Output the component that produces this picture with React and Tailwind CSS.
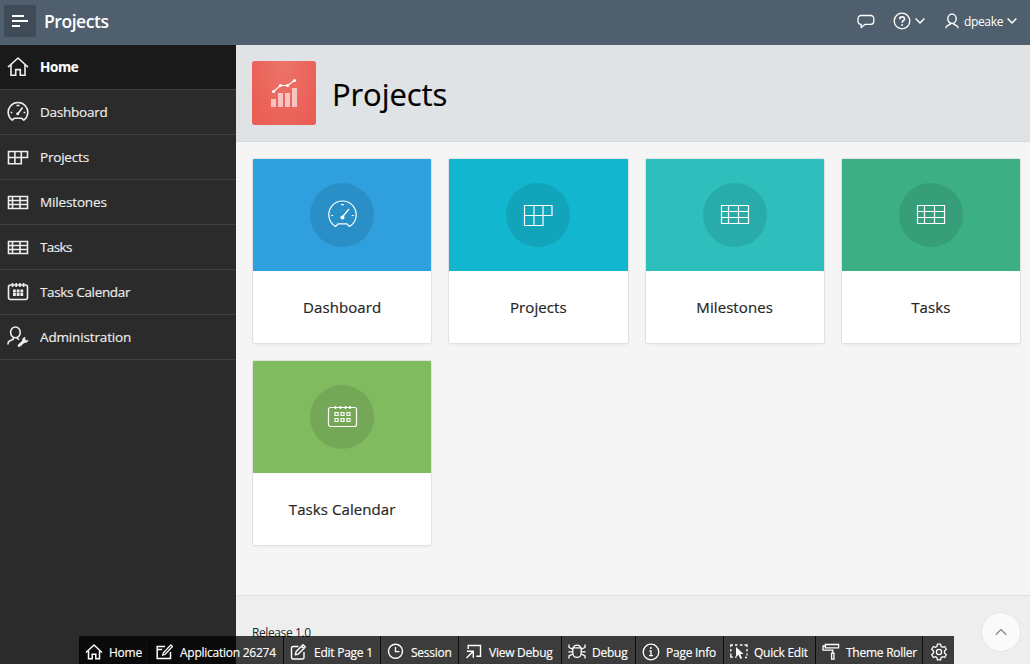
import React from "react";

const stroke = {
  fill: "none",
  stroke: "currentColor",
  strokeLinecap: "butt",
  strokeLinejoin: "round",
};

function Svg({ w = 20, h = 20, sw = 1.3, className = "", children }) {
  return (
    <svg width={w} height={h} viewBox={`0 0 ${w} ${h}`} strokeWidth={sw} {...stroke} className={`block shrink-0 ${className}`}>
      {children}
    </svg>
  );
}

const HomeIcon = () => (
  <Svg w={22} h={22} sw={1.6}>
    <path d="M1 11.2 11 2l10 9.2" />
    <path d="M4 9v10.2h4.7v-5.6h4.6v5.6H18V9" strokeLinejoin="miter" />
  </Svg>
);

const SmallHomeIcon = () => (
  <Svg w={18} h={18} sw={1.5}>
    <path d="M1 9.5 9 2l8 7.5" />
    <path d="M3.5 8v7.8h3.7v-4.6h3.6v4.6h3.7V8" strokeLinejoin="miter" />
  </Svg>
);

const GaugeIcon = () => (
  <Svg w={22} h={22} sw={1.6}>
    <path d="M5.2 19.2A9.8 9.8 0 1 1 16.8 19.2L14.8 17.3H7.2Z" />
    <path d="M9.5 4.5h3M3.6 11.5h1.8M16.6 11.5h1.8M11 12.5l4.6-6" />
    <circle cx="10.7" cy="12.8" r="1.5" fill="currentColor" stroke="none" />
  </Svg>
);

const ProjectsIcon = () => (
  <Svg w={22} h={22} sw={1.6}>
    <path d="M1.5 5.5h19v6h-6.2v6.2H1.5zM1.5 11.5h13M7.9 5.5v12.2M14.3 5.5v6" strokeLinejoin="miter" />
  </Svg>
);

const TableIcon = () => (
  <Svg w={22} h={22} sw={1.6}>
    <path d="M1.5 5.5h19v12H1.5zM1.5 9.5h19M1.5 13.5h19M5.5 5.5v12M13 5.5v12" strokeLinejoin="miter" />
  </Svg>
);

const CalendarIcon = () => (
  <Svg w={22} h={22} sw={1.6}>
    <rect x="1.5" y="4" width="19" height="14.5" rx="2" />
    <path d="M5.5 2v4M9.2 2v4M12.9 2v4M16.6 2v4" />
    <path d="M6 10h2.8M9.7 10h2.8M13.4 10h2.8M6 13.5h2.8M9.7 13.5h2.8M13.4 13.5h2.8" strokeWidth="2.8" />
  </Svg>
);

const AdminIcon = () => (
  <Svg w={22} h={22} sw={1.6}>
    <ellipse cx="8.4" cy="6.4" rx="4.8" ry="5.4" />
    <path d="M6.3 11.5v1.7L2.5 15C1.2 15.7.9 17 .9 18.6M10.4 11.4v1.2l1.8.8" />
    <path d="M12.2 19.5l4-3.6" strokeWidth="3" strokeLinecap="round" />
    <path d="M18 11.2a3 3 0 0 0-2.3 4.2 3 3 0 0 0 5.4-1.2l-1.7.5-1.6-1.5z" fill="currentColor" strokeWidth=".6" />
  </Svg>
);

const CardGauge = () => (
  <Svg w={32} h={32} sw={1.2}>
    <path d="M9.5 27.5A13.7 13.7 0 1 1 23.5 27.5L21 24.8H12Z" />
    <path d="M15 5.7h3M5.2 16.500h2M25.800 16.500h2M16.800 17.500l6.200-7.500" />
    <circle cx="16.5" cy="18.5" r="2" fill="currentColor" stroke="none" />
  </Svg>
);

const CardProjects = () => (
  <Svg w={32} h={32} sw={1.2}>
    <path d="M2.5 6.5h27.5v10h-9v10h-18.5zM2.5 16.5h18.5M12 6.5v20M21 6.5v10" strokeLinejoin="miter" />
  </Svg>
);

const CardTable = () => (
  <Svg w={32} h={32} sw={1.2}>
    <path d="M2.5 6.5h27v18h-27zM2.5 12.5h27M2.5 18.5h27M9.5 6.5v18M19.5 6.5v18" strokeLinejoin="miter" />
  </Svg>
);

const CardCalendar = () => (
  <Svg w={32} h={32} sw={1.2}>
    <rect x="2.5" y="6.5" width="28" height="19" rx="2" />
    <path d="M9.5 5v3M14.5 5v3M19.5 5v3M24 5v3" strokeWidth="1.5" />
    <path d="M9 11.5h3v3h-3zM15 11.5h3v3h-3zM21 11.5h3v3h-3zM9 17.5h3v3h-3zM15 17.5h3v3h-3zM21 17.5h3v3h-3z" strokeLinejoin="miter" />
  </Svg>
);

const ChevronDown = () => (
  <Svg w={10} h={8} sw={1.4}>
    <path d="M.6 1.5 5 6l4.4-4.5" />
  </Svg>
);

const ComposeIcon = () => (
  <Svg w={18} h={18} sw={1.5}>
    <path d="M9 3.5H1.2v12h13.3V9M1.2 6.5h5" strokeLinejoin="miter" />
    <path d="M6.6 12.3l.6-2.3 7.6-8 1.7 1.5-7.6 8z" strokeWidth="1.2" />
  </Svg>
);

const EditIcon = () => (
  <Svg w={18} h={18} sw={1.4}>
    <path d="M8.5 3.5H3a1.5 1.5 0 0 0-1.5 1.5v9.5A1.5 1.5 0 0 0 3 16h9.5a1.5 1.5 0 0 0 1.5-1.5V9" />
    <path d="m6 8.8 7-7.1 2.3 2.3-7 7.1-3 .7zM11.5 3.2l2.3 2.3" />
  </Svg>
);

const ClockIcon = () => (
  <Svg w={18} h={18} sw={1.4}>
    <circle cx="8.5" cy="8.3" r="7" />
    <path d="M8.5 4v4.6h4" strokeLinejoin="miter" />
  </Svg>
);

const ViewDebugIcon = () => (
  <Svg w={18} h={18} sw={1.4}>
    <path d="M3.2 6V2.5h12.3v10.700h-4.200" strokeLinejoin="miter" />
    <path d="M1.800 8.200h6.500v6.500M8.300 8.200 1.500 15" strokeLinejoin="miter" />
  </Svg>
);

const BugIcon = () => (
  <Svg w={18} h={18} sw={1.3}>
    <path d="M5.3 4.8A3.8 3.4 0 0 1 12.7 4.8" />
    <path d="M4.8 4.8h8.4v5.4a4.2 4.2 0 0 1-8.4 0z" />
    <path d="M1 1.5v3l3.8 1.7M17 1.5v3l-3.8 1.7M.3 8.800h4.500M13.200 8.800h4.500M1 15.500v-2.700l3.900-1.800M17 15.500v-2.700L13.100 11" />
  </Svg>
);

const InfoIcon = () => (
  <Svg w={18} h={18} sw={1.3}>
    <circle cx="9" cy="9" r="7.8" />
    <path d="M7.4 7.8H9v4.8M7 12.7h4" strokeLinejoin="miter" />
    <circle cx="8.9" cy="5" r="1" fill="currentColor" stroke="none" />
  </Svg>
);

const QuickEditIcon = () => (
  <Svg w={18} h={18} sw={1.3}>
    <path d="M.8 4V2H3M5 2h2.5M10 2h2.5M14.5 2H17v2M17 6v2.5M17 10.5v2M.8 6v2.5M.8 10.5v3.7H3M5 14.2h1.5M15 14.5h2" strokeLinejoin="miter" />
    <path d="M6 4v10l2.5-2.2 1.9 4.2 1.7-.8-1.9-4.1h3.4z" fill="currentColor" stroke="none" />
  </Svg>
);

const RollerIcon = () => (
  <Svg w={18} h={18} sw={1.3}>
    <path d="M3.4 1.5h13.2v3.4H3.4zM3.4 3H1v4.2h9.8v3" strokeLinejoin="miter" />
    <path d="M9.6 10.2H12v6H9.6z" strokeLinejoin="miter" />
  </Svg>
);

const GearIcon = () => (
  <Svg w={18} h={18} sw={1.3}>
    <path d="M7.4 1.2h3.2l.5 2.3 1.3.8 2.3-.8 1.6 2.8-1.8 1.6v2.2l1.8 1.6-1.6 2.8-2.3-.8-1.3.8-.5 2.3H7.4l-.5-2.3-1.3-.8-2.3.8-1.6-2.8 1.8-1.6V7.9L1.7 6.3l1.6-2.8 2.3.8 1.3-.8z" />
    <circle cx="9" cy="9" r="2.6" />
  </Svg>
);

const NAV = [
  { label: "Home", Icon: HomeIcon, text: "font-bold text-white tracking-[-0.4px]", active: true },
  { label: "Dashboard", Icon: GaugeIcon, text: "tracking-[-0.25px]" },
  { label: "Projects", Icon: ProjectsIcon, text: "tracking-[-0.2px]" },
  { label: "Milestones", Icon: TableIcon, text: "tracking-[-0.15px]" },
  { label: "Tasks", Icon: TableIcon, text: "tracking-[-0.6px]" },
  { label: "Tasks Calendar", Icon: CalendarIcon, text: "tracking-[-0.35px]" },
  { label: "Administration", Icon: AdminIcon, text: "tracking-[-0.15px]" },
];

const CARDS = [
  { label: "Dashboard", Icon: CardGauge, bg: "bg-[#309fdd]", dot: "bg-[#2b8fc7]" },
  { label: "Projects", Icon: CardProjects, bg: "bg-[#13b6cf]", dot: "bg-[#11a4ba]" },
  { label: "Milestones", Icon: CardTable, bg: "bg-[#2ebfbc]", dot: "bg-[#29aca9]" },
  { label: "Tasks", Icon: CardTable, bg: "bg-[#3caf85]", dot: "bg-[#369e78]" },
  { label: "Tasks Calendar", Icon: CardCalendar, bg: "bg-[#81bb5f]", dot: "bg-[#74a856]" },
];

const TOOLS = [
  { label: "Home", Icon: SmallHomeIcon, w: "w-[71px]" },
  { label: "Application 26274", Icon: ComposeIcon, w: "w-[134px]" },
  { label: "Edit Page 1", Icon: EditIcon, w: "w-[97px]" },
  { label: "Session", Icon: ClockIcon, w: "w-[78px]" },
  { label: "View Debug", Icon: ViewDebugIcon, w: "w-[103px]" },
  { label: "Debug", Icon: BugIcon, w: "w-[74px]" },
  { label: "Page Info", Icon: InfoIcon, w: "w-[88px]" },
  { label: "Quick Edit", Icon: QuickEditIcon, w: "w-[92px]" },
  { label: "Theme Roller", Icon: RollerIcon, w: "w-[107px]" },
];

function Header() {
  return (
    <header className="flex h-[45px] shrink-0 items-center bg-[#505f6d] pb-[3px] text-white">
      <button className="ml-1 flex size-8 items-center justify-center rounded-[2px] bg-[#3f4b56]">
        <Svg w={16} h={14} sw={1.8}>
          <path d="M0 2h12M0 7h16M0 12h8" />
        </Svg>
      </button>
      <span className="ml-2 text-[17.5px] font-semibold tracking-[-0.45px]">Projects</span>
      <div className="ml-auto flex items-center pr-3">
        <Svg w={18} h={16} sw={1.3} className="mt-px">
          <path d="M4 1.500h9.800a3 3 0 0 1 3 3v2.800a3 3 0 0 1-3 3H8.200l-4 3.200v-3.200H4a3 3 0 0 1-3-3V4.500a3 3 0 0 1 3-3z" />
        </Svg>
        <div className="ml-[18px] flex items-center gap-[4px]">
          <Svg w={18} h={18} sw={1.3}>
            <circle cx="9" cy="9" r="7.8" />
            <path d="M6.7 7.2c0-3.2 4.8-3 4.8-.2 0 1.7-2.4 1.8-2.4 3.7" strokeWidth="1.6" />
            <path d="M8.2 13h1.8" strokeWidth="1.6" />
          </Svg>
          <ChevronDown />
        </div>
        <div className="ml-5 mr-px flex items-center">
          <Svg w={14} h={16} sw={1.4}>
            <ellipse cx="7" cy="5.7" rx="4.2" ry="4.7" />
            <path d="M5.2 10v1.4L2.4 12.7C1.3 13.2 1 14 1 15.3M8.8 10v1.4l2.8 1.3c1.1.5 1.4 1.3 1.4 2.6" />
          </Svg>
          <span className="ml-[5px] mr-[4px] w-[39px] whitespace-nowrap pt-[2px] text-[12px] tracking-[-0.35px]">dpeake</span>
          <ChevronDown />
        </div>
      </div>
    </header>
  );
}

function Sidebar() {
  return (
    <nav className="w-[236px] shrink-0 bg-[#2b2b2b] text-[#eeeeee]">
      {NAV.map(({ label, Icon, text, active }) => (
        <a key={label} className={`flex h-[45px] items-center gap-[11px] border-b border-[#404040] pl-[7px] ${active ? "bg-[#1a1a1a]" : ""}`}>
          <Icon />
          <span className={`text-[13.5px] [-webkit-text-stroke:0.15px_#eee] ${text}`}>{label}</span>
        </a>
      ))}
    </nav>
  );
}

function Hero() {
  return (
    <div className="flex h-[97px] shrink-0 items-center border-b border-[#d5d8da] bg-[#dfe3e6] pl-4">
      <div className="flex size-16 items-center justify-center rounded-[3px] bg-radial-[at_50%_0%] from-[#ec7469] to-[#ea5a52]">
        <Svg w={32} h={32} sw={1.1}>
          <path d="M3 22h5v8H3zM10 16h5v14h-5zM17 16h5v14h-5zM24 11h5v19h-5z" fill="#fff" fillOpacity=".62" stroke="none" />
          <path d="M5.5 14.5l7-6h7l7-5" stroke="#fff" />
          <g fill="#fff" stroke="none">
            <circle cx="5.5" cy="14.5" r="1.6" />
            <circle cx="12.5" cy="8.5" r="1.6" />
            <circle cx="19.5" cy="8.5" r="1.6" />
            <circle cx="26.5" cy="3.5" r="1.6" />
          </g>
        </Svg>
      </div>
      <h1 className="ml-4 pt-[2px] text-[31px] leading-10 tracking-[-0.1px] text-black [-webkit-text-stroke:0.2px_black]">Projects</h1>
    </div>
  );
}

function DevToolbar() {
  return (
    <div className="absolute bottom-0 left-[79px] flex h-7 bg-black/75 text-[12px] text-white">
      {TOOLS.map(({ label, Icon, w }) => (
        <a key={label} className={`flex h-7 items-center gap-[6px] border-r border-black/80 pl-[6px] pt-[4px] ${w}`}>
          <Icon />
          <span className="whitespace-nowrap pt-[2px] tracking-[-0.25px] [-webkit-text-stroke:0.15px_white]">{label}</span>
        </a>
      ))}
      <a className="flex h-7 w-[31px] items-center justify-center pt-[4px]">
        <GearIcon />
      </a>
    </div>
  );
}

export default function App() {
  return (
    <div className="relative flex h-screen flex-col overflow-hidden font-['Open_Sans','Noto_Sans',sans-serif]">
      <Header />
      <div className="flex min-h-0 flex-1">
        <Sidebar />
        <main className="flex min-w-0 flex-1 flex-col bg-[#f5f5f5]">
          <Hero />
          <div className="grid flex-1 grid-cols-4 content-start gap-4 pl-4 pr-[9px] pt-4">
            {CARDS.map(({ label, Icon, bg, dot }) => (
              <article key={label} className="flex h-[186px] flex-col overflow-hidden rounded-[2px] border border-[#e1e1e1] bg-white shadow-[0_2px_4px_-2px_rgba(0,0,0,0.08)]">
                <div className={`flex h-28 items-center justify-center ${bg}`}>
                  <div className={`flex size-16 items-center justify-center rounded-full text-white ${dot}`}>
                    <Icon />
                  </div>
                </div>
                <h3 className="flex flex-1 items-center justify-center text-[15px] tracking-[0.08px] text-[#262626] [-webkit-text-stroke:0.2px_#262626]">{label}</h3>
              </article>
            ))}
          </div>
          <footer className="h-[69px] shrink-0 border-t border-[#e1e1e1] bg-[#eeeeee] pl-4 pt-[29px] text-[12px] leading-4 tracking-[-0.4px] text-[#262626]">
            Release 1.0
          </footer>
        </main>
      </div>
      <DevToolbar />
      <button className="absolute bottom-[13px] right-[10px] flex size-[38px] items-center justify-center rounded-full bg-[#fafafa] text-[#8a8a8a] shadow-[0_0_0_1px_rgba(0,0,0,0.03)]">
        <Svg w={12} h={8} sw={1.3}>
          <path d="M.8 6.8 6 1.5l5.2 5.3" />
        </Svg>
      </button>
    </div>
  );
}
